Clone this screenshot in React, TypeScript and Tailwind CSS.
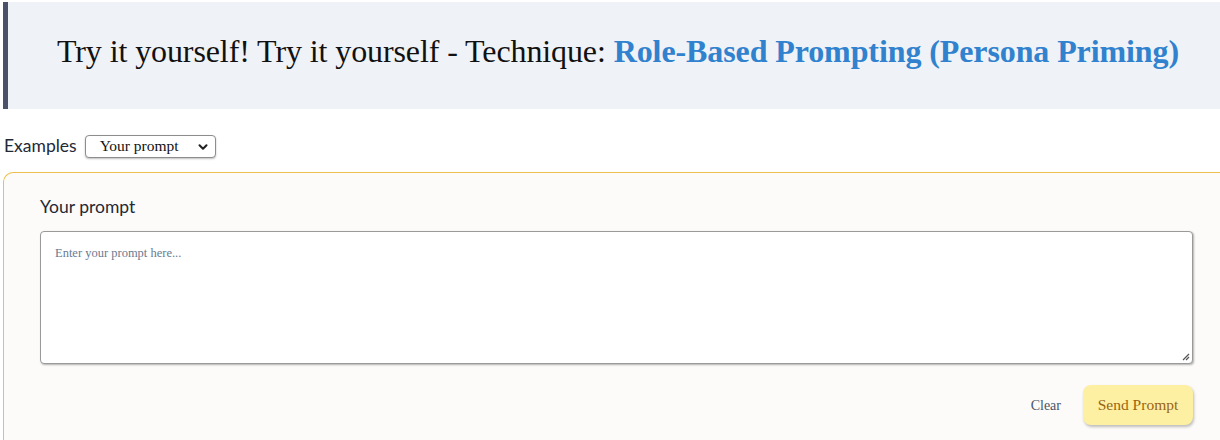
import { ChevronDown } from 'lucide-react'

const serif = { fontFamily: '"Liberation Serif", "DejaVu Serif", serif' }
const sans = { fontFamily: 'Lato, "Open Sans", sans-serif' }

export default function App() {
  return (
    <div className="w-[1220px] h-[440px] overflow-hidden bg-white pt-[2px] pl-[3px]">
      <div className="bg-[#eff2f7] border-l-[5px] border-[#4a5168] h-[107px] flex items-center justify-center pl-[8px] pb-[10px]">
        <h1 className="text-[32px] text-[#111] tracking-[-0.1px] whitespace-nowrap" style={serif}>
          Try it yourself! Try it yourself - Technique:{' '}
          <span className="font-bold text-[#3182ce]">Role-Based Prompting (Persona Priming)</span>
        </h1>
      </div>

      <div className="flex items-center gap-[8px] mt-[25px] h-[24px]">
        <span className="text-[17.5px] text-[#1f2937] pl-[1px]" style={sans}>Examples</span>
        <div className="relative w-[131px] h-[23px] rounded-[4px] border border-[#8d8d8d] bg-white shadow-[0_1px_2px_rgba(0,0,0,0.25)] flex items-center">
          <span className="pl-[14px] text-[15.5px] text-[#111]" style={serif}>Your prompt</span>
          <ChevronDown className="absolute right-[5px] top-[4px] w-[14px] h-[14px] text-[#222]" strokeWidth={3.5} />
        </div>
      </div>

      <div className="mt-[14px] w-[1260px] h-[300px] rounded-tl-[10px] border-t border-l border-[#ecc04f] bg-[#fcfbf9] pl-[36px] pr-[63px] pt-[22px]">
        <div className="text-[17.5px] leading-[24px] text-[#1f2937] mb-[12px]" style={sans}>Your prompt</div>
        <div className="relative h-[133px] w-[1153px] rounded-[4px] border border-[#9a9a9a] bg-white shadow-[1px_1px_2px_rgba(0,0,0,0.3)] pl-[14px] pt-[7px]">
          <span className="text-[12.5px] text-[#6b7a90]" style={serif}>Enter your prompt here...</span>
          <svg className="absolute right-[2px] bottom-[2px]" width="9" height="9" viewBox="0 0 9 9">
            <path d="M8 2 L2 8 M8 5 L5 8" stroke="#555" strokeWidth="1.2" />
          </svg>
        </div>
        <div className="flex justify-end items-center w-[1153px] mt-[21px] gap-[22px]">
          <span className="text-[14px] text-[#4a5568] pt-[1px]" style={serif}>Clear</span>
          <div className="w-[110px] h-[40px] rounded-[8px] bg-[#fdf0a2] shadow-[1px_2px_3px_rgba(0,0,0,0.25)] flex items-center justify-center text-[15.5px] text-[#9a6410]" style={serif}>
            Send Prompt
          </div>
        </div>
      </div>
    </div>
  )
}
